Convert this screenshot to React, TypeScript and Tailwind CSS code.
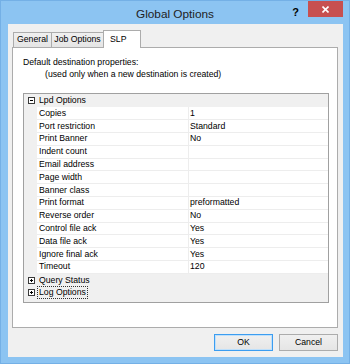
import React from 'react';

const rows: [string, string][] = [
  ['Copies', '1'],
  ['Port restriction', 'Standard'],
  ['Print Banner', 'No'],
  ['Indent count', ''],
  ['Email address', ''],
  ['Page width', ''],
  ['Banner class', ''],
  ['Print format', 'preformatted'],
  ['Reverse order', 'No'],
  ['Control file ack', 'Yes'],
  ['Data file ack', 'Yes'],
  ['Ignore final ack', 'Yes'],
  ['Timeout', '120'],
];

const Toggle = ({ open }: { open: boolean }) => (
  <svg width="7" height="7" viewBox="0 0 7 7" className="shrink-0">
    <rect x="0.5" y="0.5" width="6" height="6" fill="#fff" stroke="#3a3a3a" />
    <path d="M2 3.5h3" stroke="#000" />
    {!open && <path d="M3.5 2v3" stroke="#000" />}
  </svg>
);

const Category = ({ label, open, focused }: { label: string; open: boolean; focused?: boolean }) => (
  <div className="h-[12.8px] flex items-center pl-[4px] gap-[4px]">
    <Toggle open={open} />
    <span className={focused ? 'outline-1 outline-dotted outline-[#333] leading-[11px] px-[1px] -ml-[1px]' : ''}>{label}</span>
  </div>
);

const Tab = ({ label, w, active }: { label: string; w: string; active?: boolean }) => (
  <div
    className={
      active
        ? `${w} h-[18px] -mb-px -ml-px relative z-10 bg-white border border-b-0 border-[#acacac] pl-[6px] pt-[2px]`
        : `${w} h-[15px] -ml-px first:ml-0 bg-gradient-to-b from-[#f0f0f0] to-[#e5e5e5] border border-b-0 border-[#acacac] flex items-center justify-center`
    }>
    {label}
  </div>
);

const App = () => {
  return (
    <div className="w-[350px] h-[364px] bg-[#8cc4f2] border border-[#74b0e6] flex flex-col font-['Liberation_Sans',Arial,sans-serif] text-[8.7px] text-black overflow-hidden">
      <div className="h-[23px] grid grid-cols-[1fr_auto_1fr] items-start">
        <div />
        <div className="text-[11.8px] text-[#222] pt-[5px]">Global Options</div>
        <div className="flex justify-end items-start gap-[9px] pr-[6px]">
          <span className="text-[11px] font-bold pt-[3px]">?</span>
          <div className="w-[35px] h-[16px] bg-[#c75050] flex items-center justify-center">
            <svg width="7" height="7" viewBox="0 0 7 7">
              <path d="M0.5 0.5l6 6M6.5 0.5l-6 6" stroke="#fff" strokeWidth="1.6" />
            </svg>
          </div>
        </div>
      </div>
      <div className="flex-1 ml-[7px] mr-[6px] mb-[6px] bg-[#f0f0f0] flex flex-col pt-[6px] pl-[4px] pr-[5px]">
        <div className="h-[17px] flex items-end pl-[1px]">
          <Tab label="General" w="w-[39px]" />
          <Tab label="Job Options" w="w-[53px]" />
          <Tab label="SLP" w="w-[38px]" active />
        </div>
        <div className="h-[281px] bg-white border border-[#acacac] pt-[8px] pl-[10px]">
          <div className="leading-[12.3px]">Default destination properties:</div>
          <div className="leading-[12.3px] pl-[22px]">(used only when a new destination is created)</div>
          <div className="mt-[12px] w-[306px] h-[210px] border border-[#a0a0a0] bg-[#f0f0f0] pt-[1px]">
            <Category label="Lpd Options" open />
            {rows.map(([name, value]) => (
              <div key={name} className="h-[12.8px] flex">
                <div className="w-[13px] shrink-0" />
                <div className="w-[151px] bg-white border-b border-[#ededed] pl-[2px] flex items-center">{name}</div>
                <div className="w-px bg-[#ededed]" />
                <div className="flex-1 bg-white border-b border-[#ededed] pl-[1px] flex items-center">{value}</div>
              </div>
            ))}
            <Category label="Query Status" open={false} />
            <Category label="Log Options" open={false} focused />
          </div>
        </div>
        <div className="mt-[6px] flex justify-end gap-[6px]">
          <button className="w-[59px] h-[17px] border border-[#3c9df0] bg-gradient-to-b from-[#f0f0f0] to-[#e5e5e5] shadow-[inset_0_0_0_1px_#bfe0fb]">
            OK
          </button>
          <button className="w-[59px] h-[17px] border border-[#acacac] bg-gradient-to-b from-[#f0f0f0] to-[#e5e5e5]">
            Cancel
          </button>
        </div>
      </div>
    </div>
  );
};

export default App;
